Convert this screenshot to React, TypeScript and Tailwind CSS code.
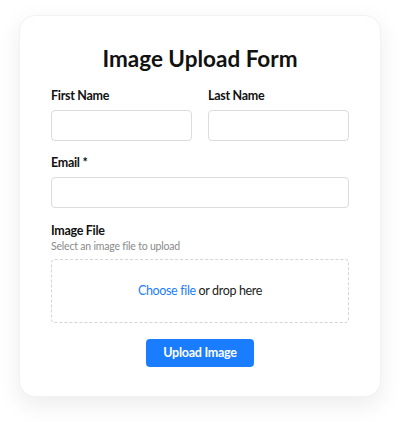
export default function App() {
  return (
    <div
      className="min-h-[422px] w-[400px] bg-white pt-[15px] pl-[19px]"
      style={{ fontFamily: 'Lato, "Open Sans", sans-serif' }}
    >
      <div className="w-[362px] h-[382px] rounded-2xl border border-[#f2f2f2] bg-white shadow-[0_8px_24px_rgba(0,0,0,0.08)] px-[31px] pt-[28px]">
        <h1 className="text-center text-[22.5px] font-bold leading-[30px] text-[#111]">
          Image Upload Form
        </h1>

        <div className="mt-[13px] grid grid-cols-2 gap-4">
          <div>
            <label className="block text-[12.5px] font-bold leading-[17px] tracking-[-0.3px] text-[#111]">First Name</label>
            <input className="mt-[6px] block h-[31px] w-full rounded border border-[#dcdcdc] outline-none" />
          </div>
          <div>
            <label className="block text-[12.5px] font-bold leading-[17px] tracking-[-0.3px] text-[#111]">Last Name</label>
            <input className="mt-[6px] block h-[31px] w-full rounded border border-[#dcdcdc] outline-none" />
          </div>
        </div>

        <div className="mt-[13px]">
          <label className="block text-[12.5px] font-bold leading-[17px] tracking-[-0.3px] text-[#111]">Email *</label>
          <input className="mt-[6px] block h-[31px] w-full rounded border border-[#dcdcdc] outline-none" />
        </div>

        <div className="mt-[14px]">
          <label className="block text-[12.5px] font-bold leading-[17px] tracking-[-0.3px] text-[#111]">Image File</label>
          <p className="text-[10.5px] leading-[15px] tracking-[-0.2px] text-[#8a8a8a]">Select an image file to upload</p>
          <div className="mt-[5px] flex h-[64px] items-center justify-center rounded border border-dashed border-[#d4d4d4] text-[12.5px] tracking-[-0.35px] text-[#222]">
            <span className="text-[#1a7cff]">Choose file</span>
            <span>&nbsp;or drop here</span>
          </div>
        </div>

        <div className="mt-[16px] flex justify-center">
          <button className="h-[28px] w-[108px] rounded bg-[#1a7cff] text-[12.5px] font-bold tracking-[-0.25px] text-white">
            Upload Image
          </button>
        </div>
      </div>
    </div>
  );
}
